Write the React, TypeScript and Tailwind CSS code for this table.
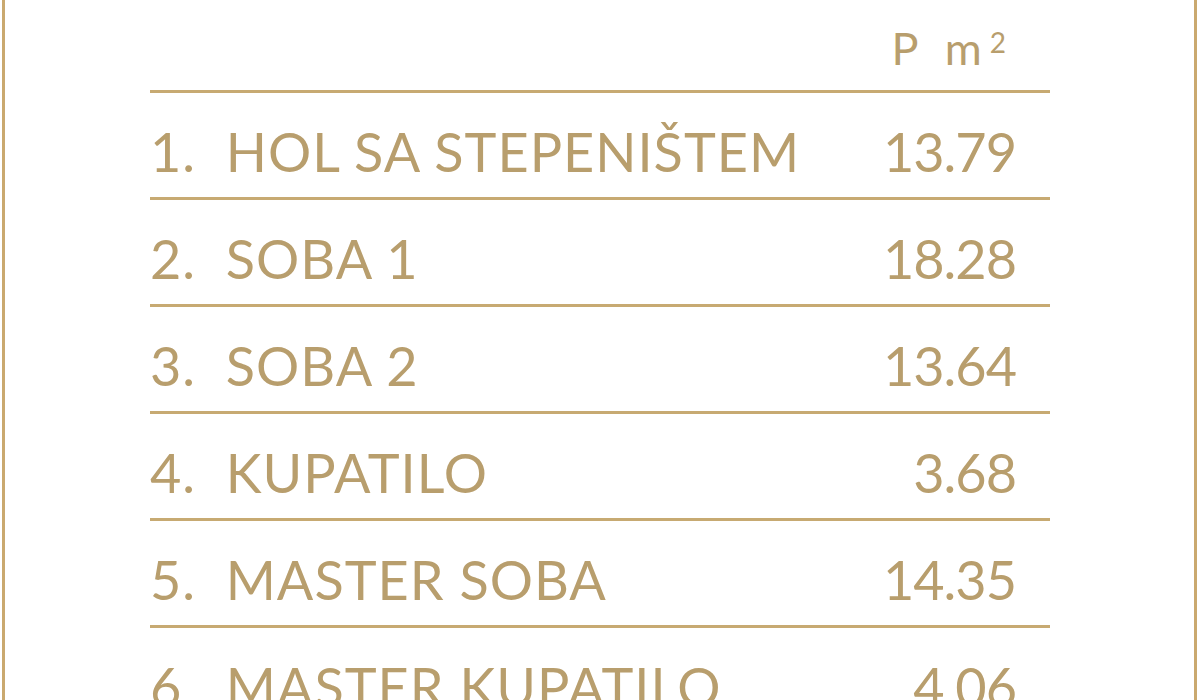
import React from "react";

const rows = [
  { n: "1.", name: "HOL SA STEPENIŠTEM", area: "13.79" },
  { n: "2.", name: "SOBA 1", area: "18.28" },
  { n: "3.", name: "SOBA 2", area: "13.64" },
  { n: "4.", name: "KUPATILO", area: "3.68" },
  { n: "5.", name: "MASTER SOBA", area: "14.35" },
  { n: "6.", name: "MASTER KUPATILO", area: "4.06" },
];

const App = () => {
  return (
    <div
      className="h-[700px] w-[1200px] overflow-hidden bg-white pl-[2px] pr-[3px]"
      style={{ fontFamily: "Lato, 'Liberation Sans', sans-serif" }}
    >
      <div className="h-full border-x-[3px] border-[#caa96f] pl-[145px]">
        <div className="w-[900px] text-[#b89e6d]">
          {/* header */}
          <div className="flex h-[93px] items-end justify-end border-b-[3px] border-[#c7aa72] pb-[19px] pr-[44px]">
            <span className="text-[45px] leading-none tracking-[8px]">
              P m<sup className="relative -top-[12px] text-[28px] tracking-normal">2</sup>
            </span>
          </div>

          {rows.map((row) => (
            <div
              key={row.n}
              className="flex h-[107px] items-center justify-between border-b-[3px] border-[#c7aa72] pt-[14px] pr-[34px]"
            >
              <span className="whitespace-pre text-[54px] leading-none tracking-[1px]">
                {row.n}  {row.name}
              </span>
              <span className="text-[54px] leading-none tracking-[-1px]">{row.area}</span>
            </div>
          ))}
        </div>
      </div>
    </div>
  );
};

export default App;
